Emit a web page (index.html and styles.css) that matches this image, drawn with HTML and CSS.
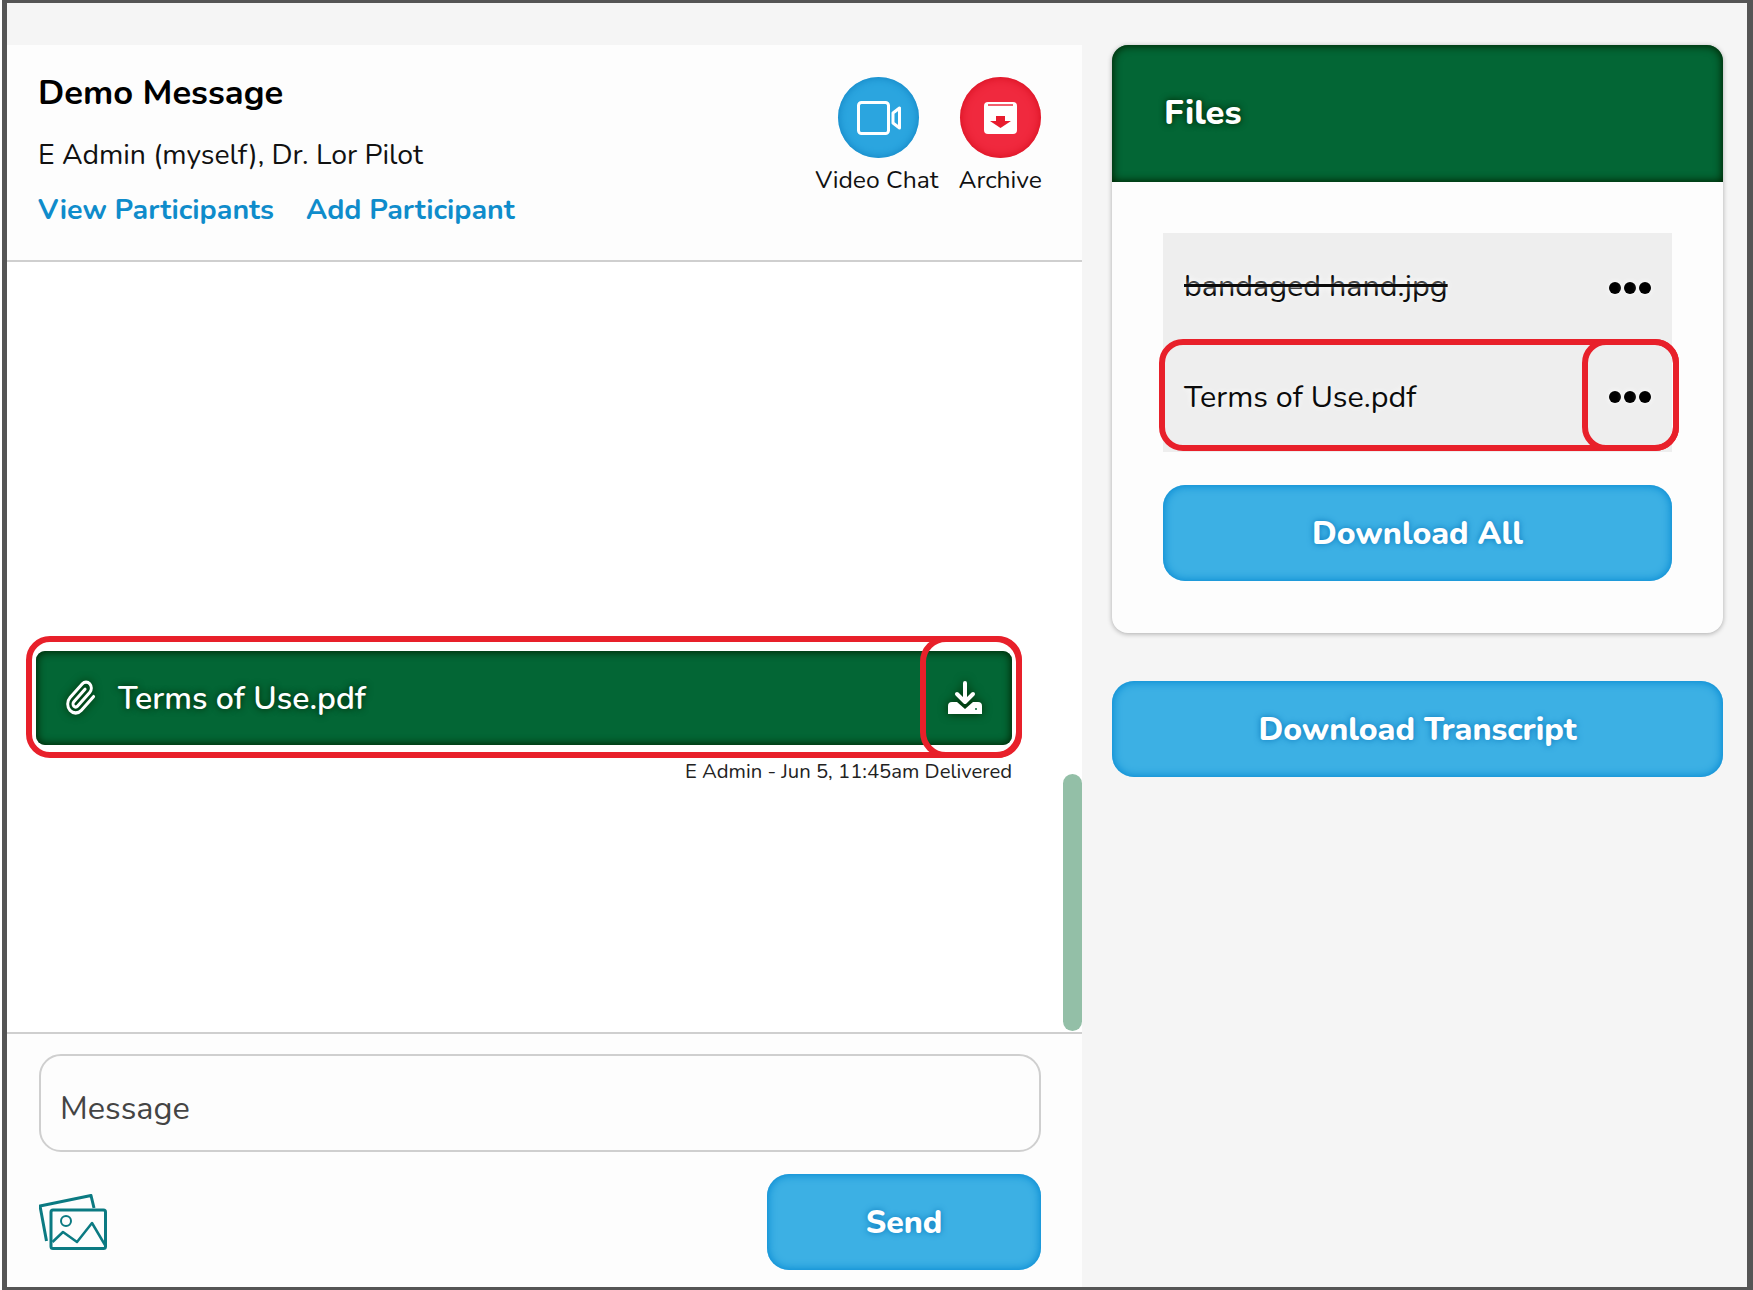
FILE: index.html
```html
<!DOCTYPE html>
<html lang="en">
<head>
<meta charset="utf-8">
<title>Demo Message</title>
<link rel="stylesheet" href="styles.css">
</head>
<body>
<div class="frame">
  <main class="conversation">
    <header class="head">
      <div class="head-info">
        <h1 class="title">Demo Message</h1>
        <p class="people">E Admin (myself), Dr. Lor Pilot</p>
        <nav class="links"><a class="link">View Participants</a><a class="link">Add Participant</a></nav>
      </div>
      <div class="actions">
        <div class="action">
          <span class="circle circle-blue">
            <svg width="44" height="34" viewBox="0 0 44 34" fill="none" stroke="#fff" stroke-width="3" stroke-linejoin="round"><rect x="1.5" y="1.5" width="30" height="31" rx="3"/><path d="M36 12 42.5 7V27L36 22Z"/></svg>
          </span>
          <span class="action-label">Video Chat</span>
        </div>
        <div class="action">
          <span class="circle circle-red">
            <svg width="33" height="32" viewBox="0 0 33 32"><rect width="33" height="32" rx="4" fill="#fff"/><path d="M4 3H29" stroke="#ee2a3c" stroke-width="1.5"/><path d="M12 14H21V19H27L16.5 26 6 19H12Z" fill="#e81c2e"/></svg>
          </span>
          <span class="action-label">Archive</span>
        </div>
      </div>
    </header>

    <section class="thread">
      <div class="message">
        <div class="attachment">
          <svg class="clip" width="32" height="36" viewBox="0 0 24 24" preserveAspectRatio="none" fill="none" stroke="#fff" stroke-width="2.2" stroke-linecap="round" stroke-linejoin="round"><path d="M21.44 11.05l-9.19 9.19a6 6 0 0 1-8.49-8.49l9.19-9.19a4 4 0 0 1 5.66 5.66l-9.2 9.19a2 2 0 0 1-2.83-2.83l8.49-8.48"/></svg>
          <span class="attachment-name">Terms of Use.pdf</span>
          <svg class="download" width="34" height="34" viewBox="0 0 34 34"><path d="M0 25Q0 21 4 21H9L17 28 25 21H30Q34 21 34 25V33H0Z" fill="#fff"/><path d="M17 2V20M9 13 17 21 25 13" fill="none" stroke="#fff" stroke-width="4" stroke-linecap="round" stroke-linejoin="round"/><circle cx="28" cy="28" r="1" fill="#036635"/></svg>
        </div>
        <p class="meta">E Admin - Jun 5, 11:45am Delivered</p>
        <span class="mark mark-bubble"></span>
        <span class="mark mark-bubble-end"></span>
      </div>
      <span class="scroll-thumb"></span>
    </section>

    <footer class="composer">
      <div class="field">Message</div>
      <div class="composer-row">
        <svg width="68" height="56" viewBox="0 0 68 56" fill="none" stroke="#0b7a82" stroke-width="3" stroke-linejoin="round"><path d="M7.5 47 1 12 52 1.5 55 14"/><rect x="12" y="16" width="54.500" height="38.500" rx="2"/><circle cx="27" cy="27" r="5" stroke-width="2"/><path d="M13.500 48 24 38 38 48 53 29 66 51" stroke-width="2.500"/></svg>
        <button class="btn btn-send">Send</button>
      </div>
    </footer>
  </main>

  <aside class="side">
    <section class="card">
      <h2 class="card-head">Files</h2>
      <div class="card-body">
        <ul class="files">
          <li class="file"><span class="file-name file-deleted">bandaged hand.jpg</span><span class="dots"><i></i><i></i><i></i></span></li>
          <li class="file"><span class="file-name">Terms of Use.pdf</span><span class="dots"><i></i><i></i><i></i></span></li>
          <li class="mark mark-file"></li>
          <li class="mark mark-file-end"></li>
        </ul>
        <button class="btn btn-full">Download All</button>
      </div>
    </section>
    <button class="btn btn-full btn-transcript">Download Transcript</button>
  </aside>
</div>
</body>
</html>
```
FILE: styles.css
```css
* { box-sizing: border-box; }
html, body { margin: 0; padding: 0; background: #fff; }
body { font-family: "Nunito", "Lato", "Noto Sans", sans-serif; color: #0b0b0b; }

.frame {
  position: relative;
  left: 2px;
  width: 1751px;
  height: 1290px;
  display: flex;
  background: #f5f5f5;
  border-style: solid;
  border-color: #555;
  border-width: 3px 6px 3px 5px;
}

/* left panel */
.conversation {
  width: 1075px;
  margin-top: 42px;
  background: #fdfdfd;
  display: flex;
  flex-direction: column;
}
.head {
  height: 217px;
  flex: none;
  display: flex;
  justify-content: space-between;
  padding: 0 40px 0 31px;
  border-bottom: 2px solid #cfcfcf;
}
.head-info { padding-top: 28px; }
.title { margin: 0; font-size: 34.5px; line-height: 40px; font-weight: 700; color: #000; }
.people { margin: 24px 0 0; font-size: 28.4px; line-height: 36px; color: #111; }
.links { display: flex; gap: 32px; margin-top: 19px; }
.link { font-size: 28.6px; line-height: 36px; font-weight: 700; color: #0f8ccb; }

.actions { display: flex; gap: 20px; padding-top: 32px; }
.action { display: flex; flex-direction: column; align-items: center; }
.circle {
  width: 81px;
  height: 81px;
  border-radius: 50%;
  display: flex;
  align-items: center;
  justify-content: center;
}
.circle-blue { margin-left: 4px; background: #2ba5df; box-shadow: inset 0 0 8px #1080c0; }
.circle-red { background: #f0293e; box-shadow: inset 0 0 10px #d40c1c; }
.action-label { margin-top: 7px; font-size: 24.7px; line-height: 30px; color: #111; white-space: nowrap; }

/* thread */
.thread {
  flex: 1;
  position: relative;
  background: #fff;
  padding: 389px 70px 0 29px;
}
.message { position: relative; }
.attachment {
  height: 94px;
  display: flex;
  align-items: center;
  padding: 0 30px 0 29px;
  background: #036635;
  border-radius: 9px;
  box-shadow: inset 0 0 9px 1px #002300;
}
.clip { flex: none; filter: drop-shadow(0 0 4px #002a00); }
.attachment-name {
  flex: 1;
  margin-left: 21px;
  font-size: 32px;
  color: #fff;
  font-weight: 600;
  text-shadow: 0 0 7px #002300;
}
.download { flex: none; filter: drop-shadow(0 0 5px #002a00); }
.meta { margin: 14px 0 0; font-size: 20.3px; line-height: 24px; color: #222; text-align: right; white-space: nowrap; }
.scroll-thumb {
  position: absolute;
  right: 0;
  top: 512px;
  bottom: 1px;
  width: 19px;
  border-radius: 10px;
  background: #93bfa7;
}

/* red annotation outlines */
.mark {
  position: absolute;
  display: block;
  list-style: none;
  border: 6px solid #e8202a;
  pointer-events: none;
}
.mark-bubble { left: -10px; right: -10px; top: -15px; height: 122px; border-radius: 24px; }
.mark-bubble-end { right: -10px; width: 102px; top: -15px; height: 122px; border-radius: 26px; }
.mark-file { left: -4px; right: -7px; top: 106px; height: 112px; border-radius: 24px; }
.mark-file-end { right: -7px; width: 97px; top: 106px; height: 112px; border-radius: 24px; }

/* composer */
.composer {
  flex: none;
  padding: 20px 41px 17px 32px;
  border-top: 2px solid #cfcfcf;
}
.field {
  height: 98px;
  padding: 10px 19px 0;
  display: flex;
  align-items: center;
  font-size: 32.5px;
  color: #444;
  background: #fdfdfd;
  border: 2px solid #cfcfcf;
  border-radius: 22px;
}
.composer-row {
  margin-top: 22px;
  display: flex;
  align-items: center;
  justify-content: space-between;
}

/* buttons */
.btn {
  display: block;
  height: 96px;
  border: 0;
  padding: 0;
  border-radius: 22px;
  background: #3cb0e4;
  box-shadow: inset 0 0 9px 1px #0689d2;
  font-family: inherit;
  font-size: 32px;
  font-weight: 800;
  color: #fff;
  text-shadow: 0 0 6px #0a78bc;
}
.btn-send { width: 274px; }
.btn-full { width: 100%; }
.btn-transcript { margin-top: 48px; }

/* right column */
.side {
  flex: 1;
  margin-top: 42px;
  padding: 0 24px 0 30px;
}
.card {
  background: #fdfdfd;
  border-radius: 16px;
  box-shadow: 0 1px 5px rgba(0, 0, 0, .3);
}
.card-head {
  margin: 0;
  height: 137px;
  padding: 0 52px 2px;
  display: flex;
  align-items: center;
  font-size: 34.5px;
  font-weight: 800;
  color: #fff;
  background: #036635;
  border-radius: 16px 16px 0 0;
  box-shadow: inset 0 0 9px 1px #002300;
  text-shadow: 0 0 7px #002300;
}
.card-body { padding: 51px 51px 52px; }
.files {
  position: relative;
  margin: 0 0 33px;
  padding: 0;
  list-style: none;
  background: #eee;
}
.file {
  height: 109.5px;
  display: flex;
  align-items: center;
  justify-content: space-between;
  padding: 0 21px;
}
.file-name { font-size: 30.5px; color: #0b0b0b; text-shadow: 0 0 6px #fff; }
.file-deleted { margin-bottom: 3px; text-decoration: line-through; }
.dots { display: flex; gap: 3px; }
.dots i { width: 12px; height: 12px; border-radius: 50%; background: #000; box-shadow: 0 0 6px #fff; }
```
